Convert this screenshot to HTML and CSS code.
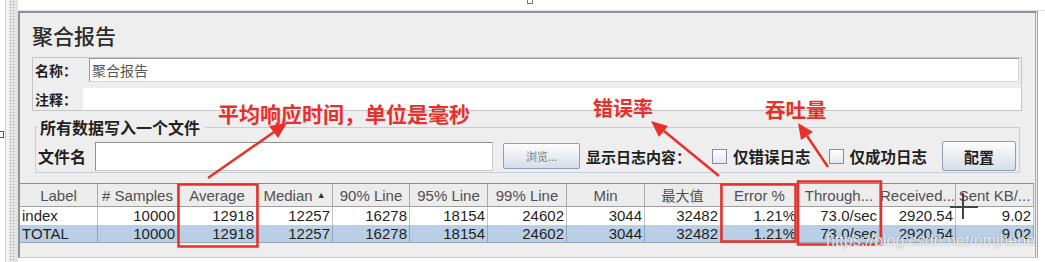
FILE: index.html
```html
<!DOCTYPE html>
<html>
<head>
<meta charset="utf-8">
<link rel="stylesheet" href="styles.css">
</head>
<body>
<div class="screen">
  <div class="gutter">
    <div class="gut-white"><span class="gut-mark"></span></div>
    <div class="gut-light"></div>
    <div class="gut-dots"></div>
    <div class="gut-edge"></div>
  </div>
  <div class="main">
    <div class="topstrip"><span class="top-mark"></span></div>
    <div class="panel">
      <div class="title">聚合报告</div>
      <div class="namebox">
        <div class="row row-name">
          <span class="lbl lbl-name">名称：</span>
          <div class="field">聚合报告</div>
        </div>
        <div class="row row-note">
          <span class="lbl lbl-note">注释：</span>
          <div class="field plain"></div>
        </div>
      </div>
      <fieldset class="group">
        <legend>所有数据写入一个文件</legend>
        <div class="filerow">
          <span class="flabel">文件名</span>
          <div class="finput"></div>
          <div class="btn browse">浏览...</div>
          <span class="showlbl">显示日志内容：</span>
          <span class="chk chk1"></span>
          <span class="chklbl">仅错误日志</span>
          <span class="chk chk2"></span>
          <span class="chklbl">仅成功日志</span>
          <div class="btn cfg">配置</div>
        </div>
      </fieldset>
      <div class="pane">
        <div class="grid">
          <div class="hc">Label</div>
          <div class="hc"># Samples</div>
          <div class="hc">Average</div>
          <div class="hc">Median <span class="sort">▲</span></div>
          <div class="hc">90% Line</div>
          <div class="hc">95% Line</div>
          <div class="hc">99% Line</div>
          <div class="hc">Min</div>
          <div class="hc cjk">最大值</div>
          <div class="hc">Error %</div>
          <div class="hc">Through...</div>
          <div class="hc">Received...</div>
          <div class="hc">Sent KB/...</div>

          <div class="c l">index</div>
          <div class="c">10000</div>
          <div class="c">12918</div>
          <div class="c">12257</div>
          <div class="c">16278</div>
          <div class="c">18154</div>
          <div class="c">24602</div>
          <div class="c">3044</div>
          <div class="c">32482</div>
          <div class="c">1.21%</div>
          <div class="c">73.0/sec</div>
          <div class="c">2920.54</div>
          <div class="c">9.02</div>

          <div class="c s l">TOTAL</div>
          <div class="c s">10000</div>
          <div class="c s">12918</div>
          <div class="c s">12257</div>
          <div class="c s">16278</div>
          <div class="c s">18154</div>
          <div class="c s">24602</div>
          <div class="c s">3044</div>
          <div class="c s">32482</div>
          <div class="c s">1.21%</div>
          <div class="c s">73.0/sec</div>
          <div class="c s">2920.54</div>
          <div class="c s">9.02</div>
        </div>
      </div>
    </div>
  </div>
</div>

<svg class="marks" width="1045" height="262" viewBox="0 0 1045 262">
  <g fill="none" stroke="#e8302a" stroke-width="2.5">
    <rect x="178.5" y="184.5" width="79" height="62"/>
    <rect x="721.5" y="184.5" width="74" height="57"/>
    <rect x="798" y="181.5" width="83" height="63"/>
    <line x1="208" y1="178" x2="274" y2="132"/>
    <line x1="719" y1="176" x2="664" y2="131"/>
    <line x1="828" y1="167" x2="807" y2="136"/>
  </g>
  <g fill="#e8302a">
    <polygon points="287,123 278,138 269,126"/>
    <polygon points="651,121 668,126 659,137"/>
    <polygon points="798,123 813,132 801,140"/>
  </g>
</svg>
<div class="note note-avg">平均响应时间，单位是毫秒</div>
<div class="note note-err">错误率</div>
<div class="note note-tp">吞吐量</div>
<div class="watermark">https://blog.csdn.net/nmjhehe</div>
<div class="cross-v"></div>
<div class="cross-h"></div>
</body>
</html>
```
FILE: styles.css
```css
* { box-sizing: border-box; }
html, body { margin: 0; padding: 0; }
body {
  width: 1045px;
  height: 262px;
  overflow: hidden;
  background: #ffffff;
  font-family: "Liberation Sans", "Noto Sans CJK SC", sans-serif;
  position: relative;
}
.screen { display: flex; height: 262px; }

.gutter { width: 18px; flex-shrink: 0; display: flex; }
.gut-white { width: 6px; background: #ffffff; border-right: 1px solid #cfcfcf; position: relative; }
.gut-mark { position: absolute; left: 0; top: 131px; width: 4px; height: 7px; border: 1px solid #555; border-left: none; }
.gut-light { width: 3px; background: #f3f3f3; }
.gut-dots {
  width: 6px;
  background-color: #ececec;
  background-image: radial-gradient(circle, #b5b5b5 0.8px, transparent 1.1px);
  background-size: 3px 3px;
}
.gut-edge { width: 3px; background: #e3e3e3; }

.main { flex: 1; display: flex; flex-direction: column; }
.topstrip { height: 11px; background: #ffffff; border-bottom: 1px solid #e2e2e2; position: relative; }
.top-mark { position: absolute; left: 509px; top: 0; width: 6px; height: 4px; border: 1px solid #777; border-top: none; }

.panel {
  width: 1020px;
  height: 247px;
  background: #eeeeee;
  border-top: 2px solid #8e939a;
  border-left: 2px solid #8e939a;
  border-right: 3px double #a7a7a7;
  border-bottom: 1px solid #c9c9c9;
  display: flex;
  flex-direction: column;
}

.title {
  margin: 10px 0 0 12px;
  font-family: "Noto Sans CJK SC", sans-serif;
  font-size: 21px;
  line-height: 24px;
  font-weight: 500;
  color: #2a2a2a;
}

.namebox {
  margin: 10px 13px 0 12px;
  border: 1px solid #c6c6c6;
  display: flex;
  flex-direction: column;
  gap: 6px;
}
.row { display: flex; align-items: center; }
.row-name { height: 24px; }
.row-note { height: 22px; }
.lbl {
  font-family: "Noto Sans CJK SC", sans-serif;
  font-size: 14px;
  font-weight: 700;
  color: #1e1e1e;
  padding-left: 2px;
}
.lbl-name { width: 56px; }
.lbl-note { width: 50px; }
.field {
  flex: 1;
  height: 24px;
  margin-right: 2px;
  background: #ffffff;
  border: 1px solid;
  border-color: #9a9a9a #d4d4d4 #d4d4d4 #9a9a9a;
  font-family: "Noto Sans CJK SC", sans-serif;
  font-size: 14px;
  line-height: 22px;
  color: #555555;
  padding-left: 2px;
}
.field.plain { height: 22px; margin-right: 0; border: none; }

.group {
  margin: 7px 15px 0 15px;
  border: 1px solid #c3d0dc;
  padding: 5px 0 1px 2px;
  min-width: 0;
}
.group legend {
  padding: 0 5px 0 2px;
  font-family: "Noto Sans CJK SC", sans-serif;
  font-size: 16px;
  line-height: 18px;
  font-weight: 700;
  color: #222222;
}
.filerow { display: flex; align-items: center; height: 30px; }
.flabel, .showlbl, .chklbl {
  font-family: "Noto Sans CJK SC", sans-serif;
  font-weight: 700;
  color: #1e1e1e;
  white-space: nowrap;
}
.flabel { font-size: 16px; }
.finput {
  margin-left: 9px;
  width: 398px;
  height: 29px;
  background: #ffffff;
  border: 1px solid;
  border-color: #8f8f8f #c9c9c9 #c9c9c9 #8f8f8f;
}
.btn {
  display: flex;
  align-items: center;
  justify-content: center;
  background: linear-gradient(#fdfdfe, #e9eef3 50%, #d6dee8);
  border: 1px solid #8fa0b4;
  border-radius: 2px;
  font-family: "Noto Sans CJK SC", sans-serif;
}
.browse {
  margin-left: 10px;
  width: 77px;
  height: 26px;
  font-size: 11px;
  color: #7c7c7c;
}
.showlbl { margin-left: 6px; font-size: 15px; }
.chk {
  width: 15px;
  height: 15px;
  background: linear-gradient(#ffffff, #e2e8ef);
  border: 1px solid #7d90a7;
}
.chk1 { margin-left: 21px; }
.chk2 { margin-left: 18px; }
.chklbl { margin-left: 6px; font-size: 15.5px; }
.cfg {
  margin-left: 15px;
  width: 74px;
  height: 30px;
  font-size: 15px;
  font-weight: 700;
  color: #1e1e1e;
}

.pane {
  margin-top: 10px;
  flex: 1;
  background: #eeeeee;
}
.grid {
  display: grid;
  grid-template-columns: 78px 80px 79px 76px 77px 78px 79px 78px 76px 78px 81px 76px 78px;
  grid-template-rows: 24px 18px 18px;
  font-size: 15px;
}
.hc {
  display: flex;
  align-items: center;
  justify-content: center;
  background: #ececec;
  border-top: 1px solid #8c8c8c;
  border-right: 1px solid #a9a9a9;
  border-bottom: 1px solid #a0a0a0;
  color: #505050;
  white-space: nowrap;
  overflow: hidden;
}
.hc.cjk { font-family: "Noto Sans CJK SC", sans-serif; font-size: 14px; }
.sort { font-size: 9px; margin-left: 4px; color: #333; }
.c {
  display: flex;
  align-items: center;
  justify-content: flex-end;
  padding-right: 2px;
  background: #ffffff;
  border-right: 1px solid #c4c4c4;
  color: #1f1f1f;
  white-space: nowrap;
  line-height: 18px;
}
.c.l { justify-content: flex-start; padding-left: 2px; }
.c.s {
  background: #b8cfe5;
  border-right-color: #91a6bd;
  border-bottom: 1px solid #9aa8b6;
}

.marks { position: absolute; left: 0; top: 0; pointer-events: none; }
.note {
  position: absolute;
  font-family: "Noto Sans CJK SC", sans-serif;
  font-weight: 700;
  color: #e8302a;
  line-height: 1;
  white-space: nowrap;
}
.note-avg { left: 218px; top: 103px; font-size: 21px; }
.note-err { left: 593px; top: 98px; font-size: 20px; }
.note-tp { left: 765px; top: 99px; font-size: 20.5px; }
.watermark {
  position: absolute;
  left: 826px;
  top: 232px;
  font-family: "Liberation Sans", sans-serif;
  font-size: 16px;
  color: rgba(255, 255, 255, 0.85);
  text-shadow: 0 0 1px rgba(90, 90, 90, 0.7);
  white-space: nowrap;
}
.cross-v { position: absolute; left: 962px; top: 193px; width: 2px; height: 26px; background: #444; }
.cross-h { position: absolute; left: 950px; top: 206px; width: 28px; height: 2px; background: #444; }
```
